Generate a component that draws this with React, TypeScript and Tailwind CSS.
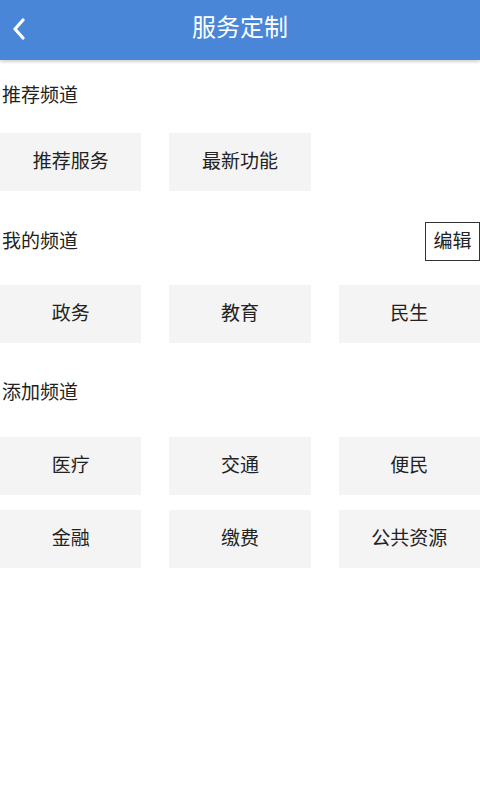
import React from 'react'

const font = { fontFamily: '"Noto Sans CJK SC", "Liberation Sans", sans-serif' }

function Cell({ label }: { label: string }) {
  return (
    <div className="flex h-[58px] items-center justify-center bg-[#f4f4f4] pb-[4px] text-[19px] text-[#222]">
      {label}
    </div>
  )
}

function Title({ children }: { children: React.ReactNode }) {
  return <div className="pb-[4px] text-[19px] leading-none text-[#222]">{children}</div>
}

export default function App() {
  return (
    <div className="min-h-[800px] w-full bg-white" style={font}>
      <header className="relative flex h-[60px] items-center justify-center bg-[#4a86d7] shadow-[0_2px_3px_rgba(0,0,0,0.18)]">
        <button className="absolute left-[10px] top-[17px] flex h-[24px] w-[18px] items-center justify-center">
          <svg width="14" height="22" viewBox="0 0 14 22" fill="none">
            <path d="M11 2L3 11L11 20" stroke="white" strokeWidth="3.2" strokeLinecap="round" strokeLinejoin="round" />
          </svg>
        </button>
        <h1 className="pb-[8px] text-[24px] leading-none text-white">服务定制</h1>
      </header>

      <section>
        <div className="mt-[15px] flex h-[40px] items-center pl-[2px]">
          <Title>推荐频道</Title>
        </div>
        <div className="mt-[18px] grid grid-cols-3 gap-[28px]">
          <Cell label="推荐服务" />
          <Cell label="最新功能" />
        </div>
      </section>

      <section>
        <div className="mt-[31px] flex h-[39px] items-center justify-between pl-[2px]">
          <Title>我的频道</Title>
          <button className="flex h-[39px] w-[55px] items-center justify-center border-[1.5px] border-[#333] pb-[3px] text-[19px] text-[#222]">
            编辑
          </button>
        </div>
        <div className="mt-[24px] grid grid-cols-3 gap-[28px]">
          <Cell label="政务" />
          <Cell label="教育" />
          <Cell label="民生" />
        </div>
      </section>

      <section>
        <div className="mt-[29px] flex h-[40px] items-center pl-[2px]">
          <Title>添加频道</Title>
        </div>
        <div className="mt-[25px] grid grid-cols-3 gap-x-[28px] gap-y-[15px]">
          <Cell label="医疗" />
          <Cell label="交通" />
          <Cell label="便民" />
          <Cell label="金融" />
          <Cell label="缴费" />
          <Cell label="公共资源" />
        </div>
      </section>
    </div>
  )
}
